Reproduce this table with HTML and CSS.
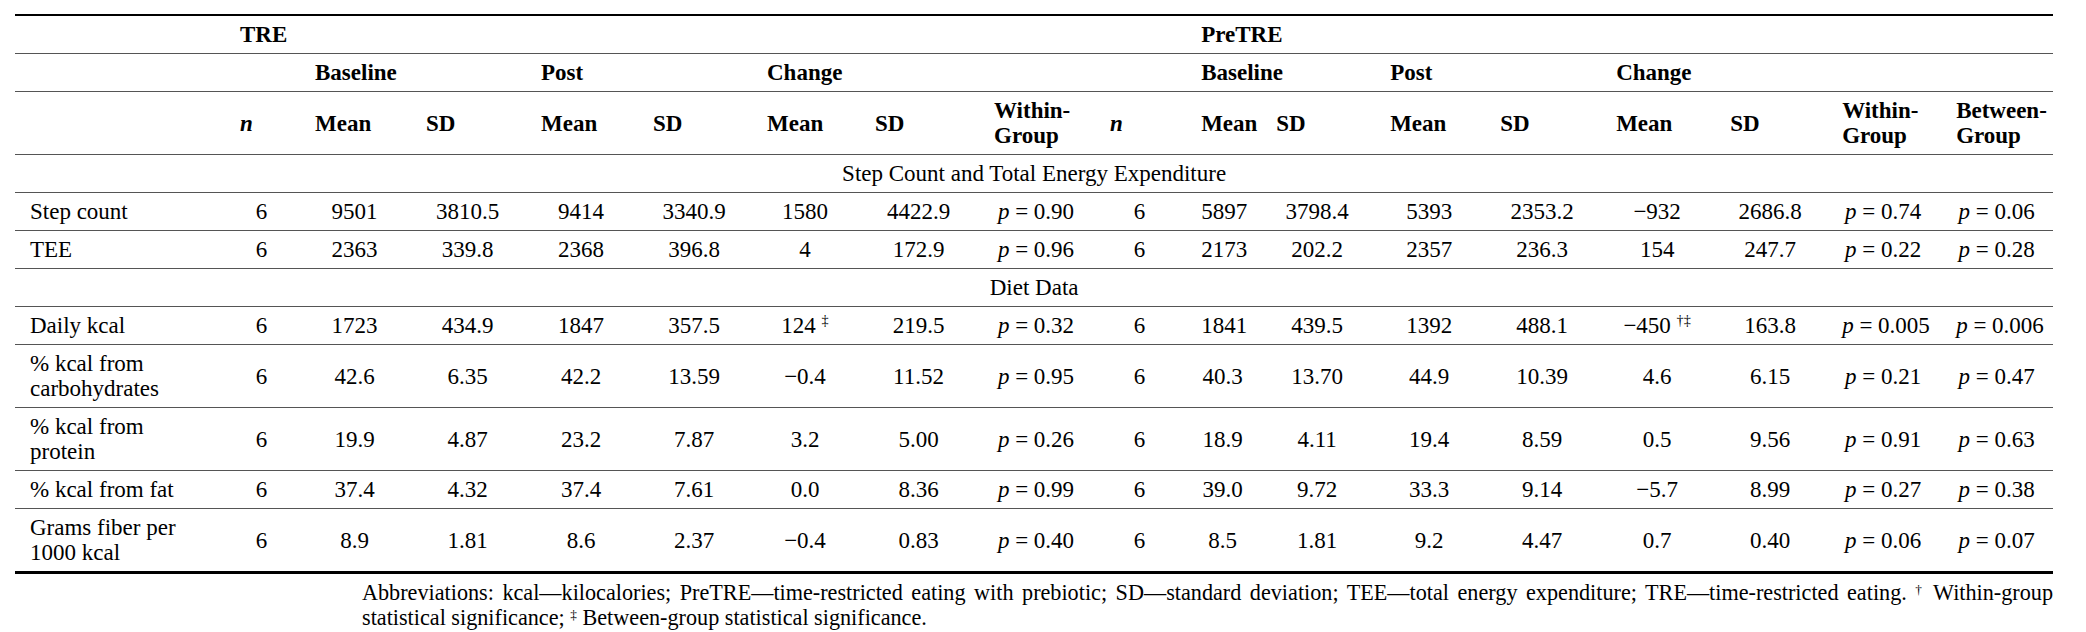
FILE: index.html
```html
<!DOCTYPE html>
<html>
<head>
<meta charset="utf-8">
<link rel="stylesheet" href="styles.css">
</head>
<body>
<div class="page">
<table class="tbl">
<colgroup>
<col class="c-label"><col class="c75"><col class="c111"><col class="c115"><col class="c112"><col class="c114"><col class="c108"><col class="c119"><col class="c116"><col class="c91"><col class="c75"><col class="c114"><col class="c110"><col class="c116"><col class="c114"><col class="c112"><col class="c114"><col class="c113">
</colgroup>
<thead>
<tr class="h1">
<th></th><th colspan="9">TRE</th><th colspan="8">PreTRE</th>
</tr>
<tr class="h2">
<th></th><th></th><th colspan="2">Baseline</th><th colspan="2">Post</th><th colspan="2">Change</th><th></th><th></th><th colspan="2">Baseline</th><th colspan="2">Post</th><th colspan="2">Change</th><th></th><th></th>
</tr>
<tr class="h3">
<th></th><th><i>n</i></th><th>Mean</th><th>SD</th><th>Mean</th><th>SD</th><th>Mean</th><th>SD</th><th>Within-<br>Group</th><th><i>n</i></th><th>Mean</th><th>SD</th><th>Mean</th><th>SD</th><th>Mean</th><th>SD</th><th>Within-<br>Group</th><th>Between-<br>Group</th>
</tr>
</thead>
<tbody>
<tr class="sec"><td colspan="18">Step Count and Total Energy Expenditure</td></tr>
<tr><td class="lbl">Step count</td><td>6</td><td>9501</td><td>3810.5</td><td>9414</td><td>3340.9</td><td>1580</td><td>4422.9</td><td><i>p</i> = 0.90</td><td>6</td><td>5897</td><td>3798.4</td><td>5393</td><td>2353.2</td><td>−932</td><td>2686.8</td><td><i>p</i> = 0.74</td><td><i>p</i> = 0.06</td></tr>
<tr><td class="lbl">TEE</td><td>6</td><td>2363</td><td>339.8</td><td>2368</td><td>396.8</td><td>4</td><td>172.9</td><td><i>p</i> = 0.96</td><td>6</td><td>2173</td><td>202.2</td><td>2357</td><td>236.3</td><td>154</td><td>247.7</td><td><i>p</i> = 0.22</td><td><i>p</i> = 0.28</td></tr>
<tr class="sec"><td colspan="18">Diet Data</td></tr>
<tr><td class="lbl">Daily kcal</td><td>6</td><td>1723</td><td>434.9</td><td>1847</td><td>357.5</td><td>124 <sup>‡</sup></td><td>219.5</td><td><i>p</i> = 0.32</td><td>6</td><td>1841</td><td>439.5</td><td>1392</td><td>488.1</td><td>−450 <sup>†‡</sup></td><td>163.8</td><td><i>p</i> = 0.005</td><td><i>p</i> = 0.006</td></tr>
<tr><td class="lbl">% kcal from<br>carbohydrates</td><td>6</td><td>42.6</td><td>6.35</td><td>42.2</td><td>13.59</td><td>−0.4</td><td>11.52</td><td><i>p</i> = 0.95</td><td>6</td><td>40.3</td><td>13.70</td><td>44.9</td><td>10.39</td><td>4.6</td><td>6.15</td><td><i>p</i> = 0.21</td><td><i>p</i> = 0.47</td></tr>
<tr><td class="lbl">% kcal from<br>protein</td><td>6</td><td>19.9</td><td>4.87</td><td>23.2</td><td>7.87</td><td>3.2</td><td>5.00</td><td><i>p</i> = 0.26</td><td>6</td><td>18.9</td><td>4.11</td><td>19.4</td><td>8.59</td><td>0.5</td><td>9.56</td><td><i>p</i> = 0.91</td><td><i>p</i> = 0.63</td></tr>
<tr><td class="lbl">% kcal from fat</td><td>6</td><td>37.4</td><td>4.32</td><td>37.4</td><td>7.61</td><td>0.0</td><td>8.36</td><td><i>p</i> = 0.99</td><td>6</td><td>39.0</td><td>9.72</td><td>33.3</td><td>9.14</td><td>−5.7</td><td>8.99</td><td><i>p</i> = 0.27</td><td><i>p</i> = 0.38</td></tr>
<tr class="last"><td class="lbl">Grams fiber per<br>1000 kcal</td><td>6</td><td>8.9</td><td>1.81</td><td>8.6</td><td>2.37</td><td>−0.4</td><td>0.83</td><td><i>p</i> = 0.40</td><td>6</td><td>8.5</td><td>1.81</td><td>9.2</td><td>4.47</td><td>0.7</td><td>0.40</td><td><i>p</i> = 0.06</td><td><i>p</i> = 0.07</td></tr>
</tbody>
</table>
<p class="note">Abbreviations: kcal—kilocalories; PreTRE—time-restricted eating with prebiotic; SD—standard deviation; TEE—total energy expenditure; TRE—time-restricted eating. <sup>†</sup> Within-group statistical significance; <sup>‡</sup> Between-group statistical significance.</p>
</div>
</body>
</html>
```

FILE: styles.css
```css
html, body {
  margin: 0;
  padding: 0;
  background: #fff;
}

.page {
  padding: 14px 0 0 15px;
  font-family: "Liberation Serif", "Times New Roman", serif;
  font-size: 23px;
  color: #000;
}

.tbl {
  width: 2038px;
  table-layout: fixed;
  border-collapse: collapse;
  border-top: 2px solid #000;
  border-bottom: 3px solid #000;
}

.c-label { width: 209px; }
.c75 { width: 75px; }
.c91 { width: 91px; }
.c108 { width: 108px; }
.c110 { width: 110px; }
.c111 { width: 111px; }
.c112 { width: 112px; }
.c113 { width: 113px; }
.c114 { width: 114px; }
.c115 { width: 115px; }
.c116 { width: 116px; }
.c119 { width: 119px; }

.tbl th,
.tbl td {
  padding: 6px 16px;
  line-height: 25px;
  vertical-align: middle;
  border-bottom: 1px solid #555;
  white-space: nowrap;
}

.tbl th {
  font-weight: bold;
  text-align: left;
}

.tbl td {
  text-align: center;
}

.tbl td.lbl {
  text-align: left;
  padding-left: 15px;
}

.tbl tr.sec td {
  text-align: center;
}

.tbl tr.last td {
  border-bottom: 3px solid #000;
}

.tbl sup {
  font-size: 0.62em;
  line-height: 0;
  vertical-align: 0.55em;
}

.note {
  margin: 6px 0 0 347px;
  width: 1691px;
  font-size: 22.2px;
  line-height: 25px;
  text-align: justify;
}

.note sup {
  font-size: 0.6em;
  line-height: 0;
  vertical-align: 0.45em;
}
```
